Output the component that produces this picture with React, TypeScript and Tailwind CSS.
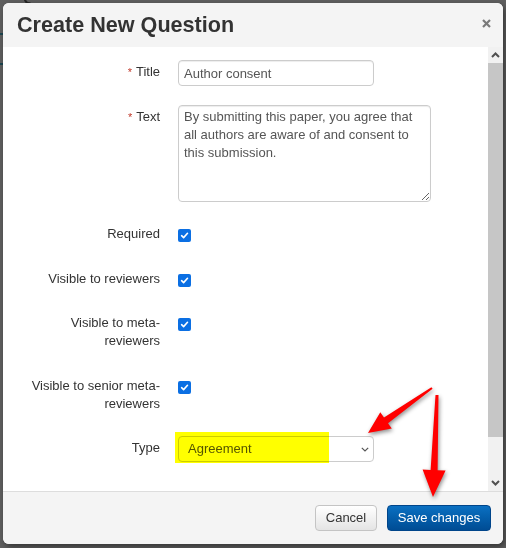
import React from 'react';

function Checkbox() {
    return (
        <span className="mt-[4px] flex h-[13px] w-[13px] items-center justify-center rounded-[2px] bg-[#0b6fe3]">
            <svg width="9" height="9" viewBox="0 0 9 9">
                <path d="M1.6 4.7 L3.6 6.6 L7.5 2.3" fill="none" stroke="#ffffff" strokeWidth="1.6" strokeLinecap="round" strokeLinejoin="round" />
            </svg>
        </span>
    );
}

function Label({ children, top = false, required = false }: { children: React.ReactNode; top?: boolean; required?: boolean }) {
    return (
        <div className={`w-[133px] shrink-0 text-right text-[13px] leading-[18px] text-[#333] ${top ? 'pt-[3px]' : ''}`}>
            {required && <span className="mr-[4px] text-[11px] text-[#c0392b]">*</span>}
            {children}
        </div>
    );
}

function Chevron({ up = false }: { up?: boolean }) {
    return (
        <svg width="9" height="6" viewBox="0 0 9 6">
            <path d={up ? 'M1 5 L4.5 1.5 L8 5' : 'M1 1 L4.5 4.5 L8 1'} fill="none" stroke="#505050" strokeWidth="2" />
        </svg>
    );
}

export default function App() {
    return (
        <div className="relative h-[548px] w-[506px] overflow-hidden bg-[#5f5f5f] font-['Liberation_Sans',Arial,Helvetica,sans-serif]">
            {/* page behind the backdrop */}
            <div className="-mt-[21px] pl-[15px] text-[24px] leading-[24px] text-[#262626]">Questions</div>
            <div className="mt-[30px] h-[2px] w-[20px] bg-[#1b4650]" />
            <div className="mt-[28px] h-[2px] w-[20px] bg-[#1b4650]" />

            {/* Modal */}
            <div className="absolute left-[3px] top-[3px] flex h-[541px] w-[500px] flex-col overflow-hidden rounded-[6px] bg-white shadow-[2px_3px_6px_rgba(0,0,0,0.45)]">
                {/* Header */}
                <div className="flex h-[44px] shrink-0 items-center justify-between bg-[#f4f4f4] pl-[14px] pr-[12px]">
                    <h2 className="text-[21.6px] font-bold leading-[24px] text-[#333]">Create New Question</h2>
                    <svg width="9" height="9" viewBox="0 0 9 9" className="-mt-[4px]">
                        <path d="M1 1 L8 8 M8 1 L1 8" stroke="#7a7a7a" strokeWidth="2.2" />
                    </svg>
                </div>

                {/* Body */}
                <div className="flex h-[444px] shrink-0">
                    <div className="flex-1 pt-[13px]">
                        <div className="flex gap-[18px] pl-[24px]">
                            <Label top required>Title</Label>
                            <input
                                readOnly
                                value="Author consent"
                                className="h-[26px] w-[196px] rounded-[4px] border border-[#ccc] px-[5px] text-[13px] text-[#555] shadow-[inset_0_1px_1px_rgba(0,0,0,0.075)] outline-none"
                            />
                        </div>

                        <div className="mt-[19px] flex gap-[18px] pl-[24px]">
                            <Label top required>Text</Label>
                            <textarea
                                readOnly
                                value="By submitting this paper, you agree that all authors are aware of and consent to this submission."
                                className="block h-[97px] w-[253px] rounded-[4px] border border-[#ccc] px-[5px] py-[2px] text-[13px] leading-[18px] text-[#555] shadow-[inset_0_1px_1px_rgba(0,0,0,0.075)] outline-none"
                            />
                        </div>

                        <div className="mt-[23px] flex gap-[18px] pl-[24px]">
                            <Label>Required</Label>
                            <Checkbox />
                        </div>

                        <div className="mt-[27px] flex gap-[18px] pl-[24px]">
                            <Label>Visible to reviewers</Label>
                            <Checkbox />
                        </div>

                        <div className="mt-[26px] flex gap-[18px] pl-[24px]">
                            <Label>Visible to meta-reviewers</Label>
                            <Checkbox />
                        </div>

                        <div className="mt-[27px] flex gap-[18px] pl-[24px]">
                            <Label>Visible to senior meta-reviewers</Label>
                            <Checkbox />
                        </div>

                        <div className="mt-[23px] flex gap-[18px] pl-[24px]">
                            <Label top>Type</Label>
                            <div className="relative w-[196px]">
                                <div className="flex h-[26px] items-center justify-between rounded-[4px] border border-[#ccc] pl-[9px] pr-[4px] text-[13px] text-[#555]">
                                    <span>Agreement</span>
                                    <svg width="8" height="5" viewBox="0 0 8 5">
                                        <path d="M0.8 0.8 L4 4 L7.2 0.8" fill="none" stroke="#555" strokeWidth="1.2" />
                                    </svg>
                                </div>
                                <div className="pointer-events-none absolute -left-[3px] -top-[4px] h-[31px] w-[154px] bg-[#ffff00] mix-blend-multiply" />
                            </div>
                        </div>
                    </div>

                    {/* Scrollbar */}
                    <div className="flex w-[15px] shrink-0 flex-col bg-[#f1f1f1]">
                        <div className="flex h-[16px] items-center justify-center">
                            <Chevron up />
                        </div>
                        <div className="h-[374px] bg-[#c6c6c6]" />
                        <div className="flex-1" />
                        <div className="flex h-[16px] items-center justify-center">
                            <Chevron />
                        </div>
                    </div>
                </div>

                {/* Footer */}
                <div className="flex flex-1 items-start justify-end gap-[10px] border-t border-[#ddd] bg-[#f4f4f4] pr-[12px] pt-[13px]">
                    <button className="h-[26px] w-[62px] rounded-[4px] border border-[#c4c4c4] bg-gradient-to-b from-white to-[#e4e4e4] text-[13px] text-[#333]">
                        Cancel
                    </button>
                    <button className="h-[26px] w-[104px] rounded-[4px] border border-[#00458a] bg-gradient-to-b from-[#0b70c2] to-[#004c94] text-[13px] text-white">
                        Save changes
                    </button>
                </div>
            </div>

            {/* Annotation arrows */}
            <svg className="pointer-events-none absolute left-0 top-0 drop-shadow-[1px_2px_2px_rgba(0,0,0,0.45)]" width="506" height="548">
                <polygon
                    fill="#ff0000"
                    points="432.6,388.8 388.0,423.2 391.8,428.5 368,433 380.3,412.2 384.0,417.5 431.4,387.2"
                />
                <polygon
                    fill="#ff0000"
                    points="438.5,395.1 437.6,470.2 445.6,470.5 433,497 422.6,469.6 430.6,469.9 435.5,394.9"
                />
            </svg>
        </div>
    );
}
